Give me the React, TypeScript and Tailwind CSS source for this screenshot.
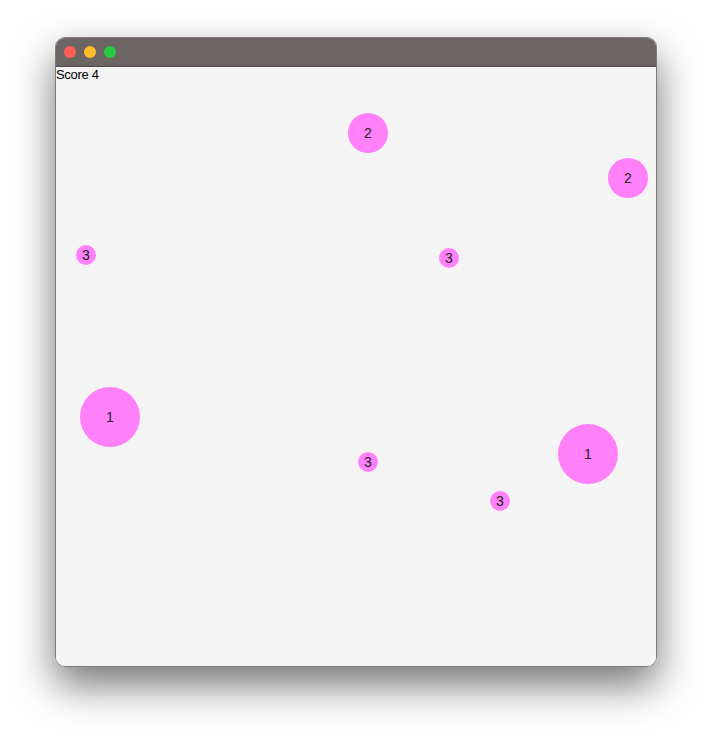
import React from "react";

const circles = [
  { x: 312, y: 66, r: 20, n: 2 },
  { x: 572, y: 111, r: 20, n: 2 },
  { x: 30, y: 188, r: 10, n: 3 },
  { x: 393, y: 191, r: 10, n: 3 },
  { x: 54, y: 350, r: 30, n: 1 },
  { x: 532, y: 387, r: 30, n: 1 },
  { x: 312, y: 395, r: 10, n: 3 },
  { x: 444, y: 434, r: 10, n: 3 },
];

export default function App() {
  return (
    <div className="w-[712px] h-[740px] bg-white flex justify-center pt-[37px]" style={{ fontFamily: '"Liberation Sans", Arial, sans-serif' }}>
      <div className="w-[602px] h-[630px] rounded-[10px] border border-[#7d7a79] overflow-hidden flex flex-col shadow-[0_18px_40px_rgba(0,0,0,0.55)]">
        <div className="h-[29px] bg-[#6b6563] border-b border-[#4e4948] flex items-center gap-2 pl-[8px] shrink-0">
          <div className="w-3 h-3 rounded-full bg-[#fe5f57]" />
          <div className="w-3 h-3 rounded-full bg-[#febc2e]" />
          <div className="w-3 h-3 rounded-full bg-[#28c840]" />
        </div>
        <div className="relative flex-1 bg-[#f4f4f4]">
          <div className="text-[13px] leading-[16px] text-black tracking-[-0.3px]">Score 4</div>
          {circles.map((c, i) => (
            <div
              key={i}
              className="absolute rounded-full bg-[#ff80f8] flex items-center justify-center text-[14px] text-[#222]"
              style={{ left: c.x - c.r, top: c.y - c.r, width: c.r * 2, height: c.r * 2 }}
            >
              {c.n}
            </div>
          ))}
        </div>
      </div>
    </div>
  );
}
